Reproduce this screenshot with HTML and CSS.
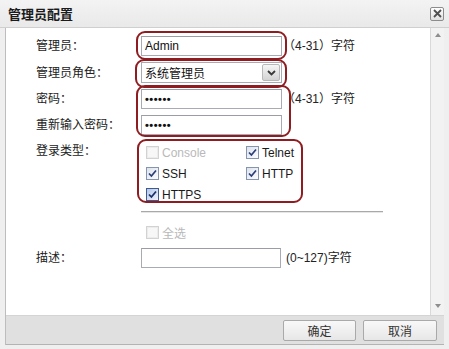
FILE: index.html
```html
<!DOCTYPE html>
<html>
<head>
<meta charset="utf-8">
<title>管理员配置</title>
<link rel="stylesheet" href="styles.css">
</head>
<body>
<div class="window">
  <div class="titlebar">
    <span class="title">管理员配置</span>
    <span class="close"><svg width="9" height="9" viewBox="0 0 9 9"><path d="M1 1 L8 8 M8 1 L1 8" stroke="#505050" stroke-width="1.8" fill="none"/></svg></span>
  </div>
  <div class="frame">
    <div class="main">
      <div class="scroll">
        <div class="form">
          <div class="row">
            <span class="lbl">管理员：</span>
            <span class="field hl-admin"><input class="txt" type="text" value="Admin"></span>
            <span class="hint">（4-31）字符</span>
          </div>
          <div class="row">
            <span class="lbl">管理员角色：</span>
            <span class="field hl-role">
              <span class="select"><span>系统管理员</span><span class="dd"><svg width="9" height="6" viewBox="0 0 9 6"><path d="M1 1 L4.5 4.5 L8 1" stroke="#3a3a3a" stroke-width="1.8" fill="none"/></svg></span></span>
            </span>
          </div>
          <div class="pwblock">
            <div class="row">
              <span class="lbl">密码：</span>
              <span class="field"><input class="txt pw" type="password" value="123456"></span>
              <span class="hint">（4-31）字符</span>
            </div>
            <div class="row">
              <span class="lbl">重新输入密码：</span>
              <span class="field"><input class="txt pw" type="password" value="123456"></span>
            </div>
          </div>
          <div class="row top">
            <span class="lbl">登录类型：</span>
            <div class="checks">
              <span class="chk off"><span class="cb off"></span>Console</span>
              <span class="chk"><span class="cb"><svg width="11" height="11" viewBox="0 0 11 11"><path d="M2 5.5 L4.4 8 L9 2.5" stroke="#2b3d78" stroke-width="1.7" fill="none"/></svg></span>Telnet</span>
              <span class="chk"><span class="cb"><svg width="11" height="11" viewBox="0 0 11 11"><path d="M2 5.5 L4.4 8 L9 2.5" stroke="#2b3d78" stroke-width="1.7" fill="none"/></svg></span>SSH</span>
              <span class="chk"><span class="cb"><svg width="11" height="11" viewBox="0 0 11 11"><path d="M2 5.5 L4.4 8 L9 2.5" stroke="#2b3d78" stroke-width="1.7" fill="none"/></svg></span>HTTP</span>
              <span class="chk"><span class="cb focus"><svg width="11" height="11" viewBox="0 0 11 11"><path d="M2 5.5 L4.4 8 L9 2.5" stroke="#1d2f6a" stroke-width="1.8" fill="none"/></svg></span>HTTPS</span>
            </div>
          </div>
          <div class="sep"></div>
          <div class="row all">
            <span class="lbl"></span>
            <span class="chk off indent"><span class="cb off"></span>全选</span>
          </div>
          <div class="row desc">
            <span class="lbl">描述：</span>
            <span class="field"><input class="txt short" type="text" value=""></span>
            <span class="hint wide">(0~127)字符</span>
          </div>
        </div>
      </div>
      <div class="scrollbar">
        <span class="arrow-up"></span>
        <span class="arrow-down"></span>
      </div>
    </div>
    <div class="footer">
      <span class="btn">确定</span>
      <span class="btn wide">取消</span>
    </div>
  </div>
</div>
</body>
</html>
```

FILE: styles.css
```css
* { box-sizing: border-box; }
html, body { margin: 0; padding: 0; }
body {
  width: 449px;
  height: 349px;
  overflow: hidden;
  background: #efefef;
  font-family: "Liberation Sans", "Noto Sans CJK SC", sans-serif;
  font-size: 12px;
  color: #222;
}
.window { width: 449px; height: 349px; }

.titlebar {
  height: 28px;
  display: flex;
  align-items: center;
  justify-content: space-between;
  padding: 0 5px 0 8px;
  background: linear-gradient(#f3f3f3, #e9e9e9);
  border-bottom: 1px solid #cfcfcf;
}
.title { font-weight: bold; font-size: 13px; color: #1b1b1b; }
.close {
  width: 14px;
  height: 14px;
  border: 1px solid #8c8c8c;
  border-radius: 2px;
  background: linear-gradient(#ffffff, #e0e0e0);
  display: flex;
  align-items: center;
  justify-content: center;
}

.frame {
  margin-left: 5px;
  width: 439px;
  border-left: 1px solid #bdbdbd;
}
.main { display: flex; height: 287px; }
.scroll { width: 424px; background: #fff; }
.scrollbar {
  width: 14px;
  background: #f2f2f2;
  border-left: 1px solid #d9d9d9;
  display: flex;
  flex-direction: column;
  justify-content: space-between;
  align-items: center;
  padding: 5px 0 7px;
}
.arrow-up {
  width: 0; height: 0;
  border-left: 3.5px solid transparent;
  border-right: 3.5px solid transparent;
  border-bottom: 4px solid #8e8e8e;
}
.arrow-down {
  width: 0; height: 0;
  border-left: 3.5px solid transparent;
  border-right: 3.5px solid transparent;
  border-top: 4px solid #8e8e8e;
}

.footer {
  height: 30px;
  background: #e0e0e0;
  border-top: 1px solid #d4d4d4;
  border-bottom: 1px solid #b3b3b3;
  display: flex;
  justify-content: flex-end;
  gap: 7px;
  padding: 4px 7px 0 0;
}
.btn {
  width: 73px;
  height: 21px;
  border: 1px solid #a9a9a9;
  border-radius: 2px;
  background: linear-gradient(#f8f8f8, #e7e7e7);
  color: #333;
  display: flex;
  align-items: center;
  justify-content: center;
}
.btn.wide { width: 74px; }

/* form */
.form { padding: 8px 0 0 30px; }
.row { display: flex; align-items: center; margin-top: 6px; }
.form > .row:first-child { margin-top: 0; }
.pwblock { position: relative; margin-top: 6px; }
.pwblock > .row:first-child { margin-top: 0; }
.row.top { align-items: flex-start; }
.lbl { width: 105px; flex: none; line-height: 20px; color: #222; }
.field { position: relative; display: block; }
.txt {
  display: block;
  width: 141px;
  height: 20px;
  margin: 0;
  border: 1px solid #a8abb2;
  border-top-color: #9a9da4;
  padding: 0 3px;
  font-family: "Liberation Sans", "Noto Sans CJK SC", sans-serif;
  font-size: 12px;
  color: #111;
  background: #fff;
  outline: none;
}
.txt.pw { font-size: 11px; font-weight: bold; letter-spacing: 0.5px; }
.txt.short { width: 140px; }
.hint { margin-left: 1px; line-height: 20px; color: #222; }
.hint.wide { margin-left: 5px; }

.select {
  width: 141px;
  height: 21px;
  border: 1px solid #a8abb2;
  display: flex;
  align-items: center;
  justify-content: space-between;
  padding: 0 1px 0 3px;
  background: #fff;
  color: #111;
}
.dd {
  width: 18px;
  height: 17px;
  border: 1px solid #b9b9b9;
  border-radius: 2px;
  background: linear-gradient(#f6f6f6, #d3d3d3);
  display: flex;
  align-items: center;
  justify-content: center;
}

/* annotation outlines over fields */
.hl-admin::after,
.hl-role::after,
.pwblock::after,
.checks::after {
  content: "";
  position: absolute;
  border: 2px solid #8e1c20;
  border-radius: 9px;
  pointer-events: none;
}
.hl-admin::after { left: -5px; right: -5px; top: -5px; bottom: -4px; }
.hl-role::after { left: -6px; right: -5px; top: -3px; bottom: -5px; }
.pwblock::after { left: 100px; width: 151px; top: -4px; bottom: -2px; }
.checks::after { left: -4px; width: 162px; top: -2px; bottom: 2px; }

.checks {
  position: relative;
  width: 152px;
  display: grid;
  grid-template-columns: 100px auto;
  grid-auto-rows: 21px;
  padding: 1px 0 0 5px;
}
.chk { display: flex; align-items: center; color: #1a1a1a; }
.chk.off { color: #b9b9b9; }
.chk.indent { margin-left: 5px; }
.cb {
  width: 13px;
  height: 13px;
  flex: none;
  margin-right: 3px;
  border: 1px solid #8694ad;
  background: linear-gradient(135deg, #dde3ec, #fbfcfd);
  display: flex;
  align-items: center;
  justify-content: center;
}
.cb.off {
  border-color: #d2d2d2;
  background: #f7f7f7;
  box-shadow: inset 0 0 0 1px #ececec;
}
.cb.focus {
  border-color: #3d5b90;
  background: linear-gradient(135deg, #b4c7e6, #eef3fb);
}

.sep {
  margin: 6px 0 0 105px;
  width: 242px;
  height: 2px;
  border-top: 1px solid #a9a9a9;
  border-bottom: 1px solid #e6e6e6;
}
.row.all { height: 26px; }
.row.desc { margin-top: 3px; }
```
